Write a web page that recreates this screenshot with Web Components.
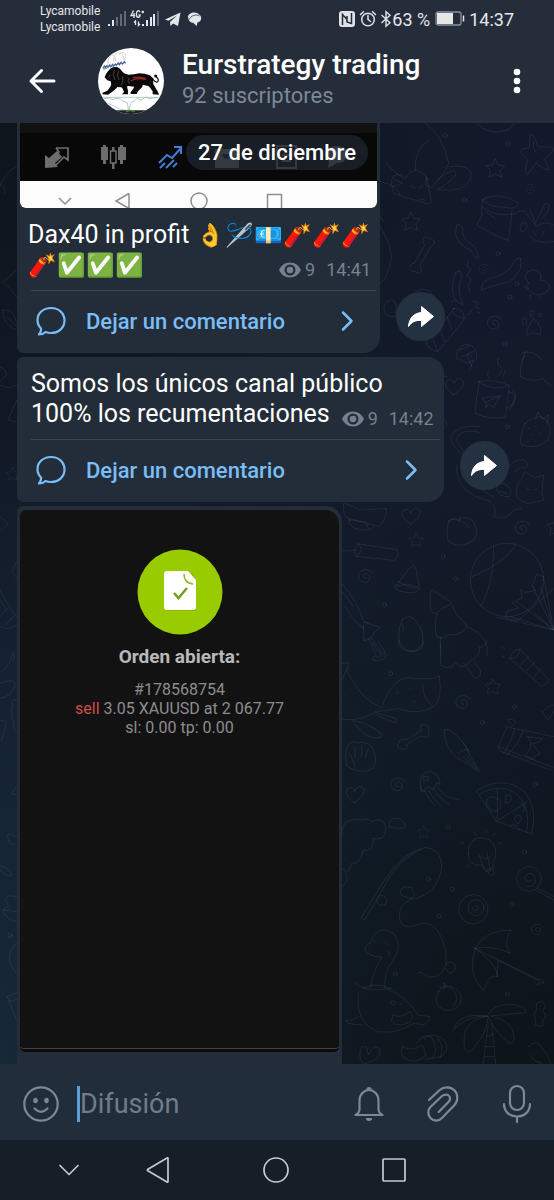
<!DOCTYPE html>
<html lang="es">
<head>
<meta charset="utf-8">
<meta name="viewport" content="width=device-width, initial-scale=1">
<title>Eurstrategy trading</title>
<style>
  html, body { margin: 0; background: #161e27; }
  body { font-family: Roboto, "Noto Sans", sans-serif; color: #fff; }
</style>
</head>
<body>
<chat-app></chat-app>

<script>
(function() {
    // shared by every element of the page
    const base = `
    <style>
      *, *::before, *::after { box-sizing: border-box; }
      svg { display: block; flex: none; fill: none; }
      button { margin: 0; padding: 0; border: 0; background: none; color: inherit; font: inherit; cursor: pointer; }
      a { color: inherit; text-decoration: none; }
    </style>
    `;

    function define(name, html) {
        const template = document.createElement("template");
        template.innerHTML = base + html;

        customElements.define(name, class extends HTMLElement {
            constructor() {
                super();
                this._shadowRoot = this.attachShadow({mode: "open"});
                this._shadowRoot.appendChild(template.content.cloneNode(true));
            }
        });
    }

    define("status-bar", `
    <style>
      :host { display: flex; align-items: center; height: 38px; padding: 0 40px; color: #e4e7eb; }
      .carriers { font-size: 12px; line-height: 16px; margin-right: 8px; }
      .right { display: flex; align-items: center; margin-left: auto; font-size: 18px; }
      .right svg + svg { margin-left: 4px; }
      .right svg + .bluetooth { margin-left: 3px; }
      .battery { margin: 0 4px 0 5px; }
    </style>
    <div class="carriers"><div>Lycamobile</div><div>Lycamobile</div></div>
    <svg width="96" height="24" viewBox="108 7 96 24" aria-hidden="true">
      <g fill="#e4e7eb">
        <rect x="108" y="24" width="2" height="2"/><rect x="112" y="20" width="2" height="6"/>
        <g fill="#626a76"><rect x="116" y="17" width="2" height="9"/><rect x="120" y="14" width="2" height="12"/><rect x="124" y="11" width="2" height="15"/><rect x="157" y="11" width="2" height="15"/></g>
        <rect x="142" y="24" width="2" height="2"/><rect x="146" y="20" width="2" height="6"/><rect x="150" y="17" width="2" height="9"/><rect x="153" y="14" width="2" height="12"/>
        <path d="M165 19.500 180.500 12.500 178 26 173 23.500 170.500 26 170 22 177 15.500 168.500 20.700Z"/>
        <path d="M188 17c0-5 9-6 11-2.500C203 17 201 22 197.500 22.500l-1 3.500-3-3c-4-.5-5-3-5.500-6Z"/>
      </g>
      <path d="M189.500 19.500c0-4 8-5.500 10-3.500" stroke="#252d3a" stroke-width=".7"/>
      <path d="M133.500 10.500 131 15.500h4.200M134 13v5M140 12c-1-2-3.500-1.500-3.500 1v2c0 3 3.500 3 3.500 0h-1.500M141.500 12h2.500M142.800 10.700v2.600M135.500 25v-4l-1.500 1.500M138.500 21.500v4l1.500-1.500" stroke="#e4e7eb" stroke-width="1.300"/>
    </svg>
    <div class="right">
      <svg width="16" height="16" viewBox="0 0 16 16" aria-hidden="true"><rect width="16" height="16" rx="3" fill="#dfe2e6"/><path d="M3.500 14V3.500L8 8.500V5M8 7.500v3.500l4.500 1.500V2" stroke="#252d3a" stroke-width="1.500"/></svg>
      <svg width="18" height="18" viewBox="0 0 18 18" stroke="#dfe2e6" stroke-width="1.500" stroke-linecap="round" aria-hidden="true"><circle cx="9" cy="9.500" r="6.300"/><path d="M9 5.500v4l2.500 2M1.500 4.500l3-2.800M16.500 4.500l-3-2.800"/></svg>
      <svg class="bluetooth" width="12" height="18" viewBox="0 0 12 18" stroke="#dfe2e6" stroke-width="1.400" aria-hidden="true"><path d="M1.500 5 10 12.800 6 16.300V1.700L10 5.200 1.500 13"/></svg>
      <span>63 %</span>
      <svg class="battery" width="30" height="16" viewBox="0 0 30 16" aria-hidden="true"><rect x="1" y="1" width="25" height="13" rx="2" stroke="#8b919b" stroke-width="1.300"/><path d="M2 2h16v11H2Z" fill="#e6e6e6"/><path d="M28.500 4.500v6" stroke="#dfe2e6" stroke-width="1.500"/></svg>
      <span>14:37</span>
    </div>
    `);

    define("channel-avatar", `
    <style>
      :host { display: block; width: 66px; height: 66px; border-radius: 50%; overflow: hidden; background: #fff; }
    </style>
    <svg width="66" height="66" viewBox="0 0 198 198" role="img" aria-label="Eurstrategy trading">
      <g stroke="#cfcfd4" stroke-width="3"><path d="M30 48c-2-30 22-38 24-8M46 40c0-30 30-36 32-4M62 20c18-18 28 4 14 22"/></g>
      <path d="M15 61l4-7 3 5 5-6 3 5 5-7 3 5 6-7 3 5 5-6 3 4 6-7 3 5 5-7 4 5 6-6 4 4" stroke="#4c5f9c" stroke-width="4"/>
      <path d="M16 64l12-4M38 56l12-4" stroke="#3c9480" stroke-width="3"/>
      <g fill="#0b0808">
        <path d="M20 88 24 78 30 70 38 61 48 57 58 57 66 62 72 70 78 76 92 80 108 79 124 76 140 77 156 82 164 90 166 102 158 112 146 113 134 110 122 114 108 116 92 114 80 117 66 118 50 116 40 110 38 100 28 97Z"/>
        <path d="M42 106 36 118 28 128 14 134 13 139 30 140 42 132 56 120 62 112Z"/>
        <path d="M66 112 74 122 78 132 72 139 90 139 90 128 86 112Z"/>
        <path d="M112 108 106 122 98 132 98 138 116 138 120 130 132 118 136 108Z"/>
        <path d="M142 108 154 116 164 130 164 139 183 140 180 132 174 122 166 108 164 96Z"/>
      </g>
      <path d="M163 90c6 14 18 16 18 6 0-7-8-8-8-14" stroke="#0b0808" stroke-width="3.500"/><circle cx="173" cy="84" r="4.500" fill="#0b0808"/>
      <path d="M30 88q6-2 7-9M49 66q-7 13 2 30M62 67q-8 15 1 29M74 86q3 16-5 26M94 90q-8 8 0 17" stroke="#5f5f66" stroke-width="2"/>
      <path d="M98 99q18-12 45-5M104 89q22-5 41 4" stroke="#8a2c1e" stroke-width="4"/>
      <path d="M12 148h174M18 152l16-2 8 5 12-4 13 2 9 7 12 4 4 24 7-25 10-4 8-8 13 5 12-8 14 4 22-4" stroke="#8fb0ad" stroke-width="2"/>
      <path d="M18 162l26 10 18 10 20 5 12-3" stroke="#c8cddd" stroke-width="3"/>
      <path d="M40 187h120v11H40Z" fill="#1a251b"/><path d="M84 191q14-7 26 0" stroke="#51803e" stroke-width="4"/>
    </svg>
    `);

    define("chat-header", `
    <style>
      :host { display: flex; align-items: center; height: 85px; padding: 0 22px; }
      .back, .more { display: grid; place-items: center; width: 40px; height: 40px; }
      .more { width: 30px; }
      channel-avatar { margin: 0 18px 0 36px; }
      .names { flex: 1; min-width: 0; }
      h1 { margin: 0; font-size: 28px; line-height: 30px; font-weight: 500; white-space: nowrap; }
      p { margin: 0; font-size: 22px; line-height: 32px; color: #7c8896; }
    </style>
    <button class="back" aria-label="Atrás"><svg width="28" height="26" viewBox="0 0 28 26" stroke="#fff" stroke-width="3" stroke-linecap="round" stroke-linejoin="round"><path d="M26 13H3M13.500 2.500 3 13l10.500 10.500"/></svg></button>
    <channel-avatar></channel-avatar>
    <div class="names"><h1><slot name="title"></slot></h1><p><slot name="subtitle"></slot></p></div>
    <button class="more" aria-label="Más opciones"><svg width="8" height="28" viewBox="0 0 8 28"><g fill="#fff"><circle cx="4" cy="5" r="3.300"/><circle cx="4" cy="14" r="3.300"/><circle cx="4" cy="23" r="3.300"/></g></svg></button>
    `);

    // doodle wallpaper, lies behind the posts
    define("chat-wallpaper", `
    <style>
      :host {
        display: block; position: absolute; inset: 0; overflow: hidden;
        background:
          radial-gradient(circle at 100% 100%, #0d141a 0, transparent 55%),
          radial-gradient(circle at 0 100%, #182a39 0, transparent 60%),
          radial-gradient(circle at 0 0, #0d161d 0, transparent 45%),
          linear-gradient(#13192a 0, #131a2a 45%, #111c2a 75%, #101a22 100%);
      }
      svg { width: 100%; height: 100%; stroke: #8aa0c0; stroke-opacity: .13; stroke-width: 3; stroke-linecap: round; stroke-linejoin: round; }
    </style>
    <svg viewBox="0 123 554 941" preserveAspectRatio="xMaxYMin slice" aria-hidden="true">
      <defs>
        <path id="star" d="M0-28 9-10 28-8 15 6 19 26 0 17-19 26-15 6-28-8-9-10Z"/>
        <path id="swirl" d="M3 4C-7 8-10-6 1-9 14-11 19 8 6 16-12 22-26 4-18-11-10-24 14-26 22-10"/>
        <path id="heart" d="M-2 26C-20 14-34-2-24-14-16-24-4-18-2-8 4-24 20-26 26-14 30 2 12 14-2 26Z"/>
        <path id="bone" d="M-22 34 8-18C-4-38 14-52 20-38 38-38 44-20 26-14L-6 42C6 58-10 74-20 60-40 64-42 38-22 34Z"/>
        <circle id="dot" r="6"/>
      </defs>
      <g transform="translate(277 120) scale(.3333)">
        <path d="M325 10q0-20-10-30M445 10q50 30 70 120-15 35-50 70M455 60q-45 30-40 90M515 140q80-10 65 40-20 40-98 28 70-40 50-56-30 6-50 30M325 125q30 40 60 50 30-50 70 5M310 185q50 10 60 40M375 165q-45-10-25 55l30 10 60 18q30 12 20-20l-12-55M352 178l25 12-30 10M450 170l-5 25 20 8M403 195q2 12 12 8M435 195q-2 10-10 10M430 238l15 3M600 10q40 40 90 20 20-10 25-25"/>
        <path d="M760 45q10-10 22 35l45 2q12 10-25 35l15 30q-5 10-40-18l-25 35q-12-4 0-45l-20-20q0-15 24-15ZM770 65q-5 20 8 35M625 230q-15 22-10 55l-15 30q55 35 95 46l10-90M615 240q50-30 110 10-5 20-40 12-50 0-70-22ZM615 260q40 35 105 20M625 275l30 20M720 275q25-10 35 15l25 30q20-20 50-5M760 270l15 40 30-60q20 0 5 30l-15 15M735 310q10-10 15 5t-15 20q-12-8 0-25M755 345q20 30 76 20M770 335l8 12M800 335l-5 13"/>
        <path d="M540 315q10-5 18 10-8 30 34 55 16 25 10 35-14-2-18-22-42-18-48-50ZM575 420l-5 18 12 10-12 18 12 14-8 16 5 20M535 460q20-20 18 15-15 30 5 80-16-8-26-20-12-30 3-75ZM730 415q-12-4-22 15-8 25-50 40-48 10-45 40 50-18 85-25 45-35 32-70ZM755 490q-25-30 10-40 35 2 25 30 35 5 25 30-30 30-60 0-12-10 0-20ZM740 500l15 5M760 525v10M785 527l5 8"/>
        <path d="M530 565q30 0 32 30-10 20-80 100-30-5-35-30 60-60 83-100ZM530 565q-10 25 32 30M510 590l15 40M487 615l15 50M462 640l20 55M340 540q-25 10-18 35 15 25 40 10M345 540q20 5 10 40M410 525q20-30 50-10l5 20-55 10M770 595q-25 35-20 50 20-12 40 0 8-25-20-50ZM740 615q-10-12 0-20t8 20M762 590q-8-18 4-18t-4 18M785 590q0-15 8-8t-8 8M540 720q-8-40 30-48 35 8 28 48M548 690l30-12M555 710l35-15M570 705q8-10 15 5M735 700q30-15 60 20M745 695l-8 25M310 320q35 60 33 95-10 60-33 75M310 290l10 15M525 545l12-4M590 545q20 0 10 10t5 10M585 570l-12 15M600 575l8 5"/>
        <use href="#star" x="655" y="145"/><use href="#star" x="402" y="305"/><use href="#bone" x="435" y="394"/>
        <use href="#swirl" transform="translate(762 208) scale(.7)"/><use href="#swirl" transform="translate(620 448) scale(.7)"/><use href="#swirl" x="652" y="610"/>
        <use href="#dot" x="505" y="47"/><use href="#dot" x="692" y="72"/><use href="#dot" x="563" y="240"/><use href="#dot" x="663" y="401"/><use href="#dot" x="720" y="491"/><use href="#dot" x="699" y="531"/><use href="#dot" x="684" y="672"/>
      </g>
      <g transform="translate(277 355) scale(.3333)">
        <path d="M545 10q25 25 45 5l-12 30M570 0l15 35M730 65q0-50 15-65M730 65q40 20 65 5l30 25M607 80q-10 50-12 95 40 20 90 12l12-95M605 80q50-10 92 12-50 20-92-12M695 110q30 5 10 40l-17 10M708 105q20 20-10 60M615 130l55-8-20 35-18-10-5 12-2-18ZM625 142l42-18M635 50q-8 10 3 20M665 10q-10 15 5 25t-10 30M685 45l-8 22M745 205q-20 50-12 65 45 15 80-15 20-50-20-70-25 0-48 20ZM775 195l8-25 12 22 20-12-5 25M755 220h3M775 215h3M760 240h3M785 235h3M800 220h3M750 258h3M775 260h3"/>
        <path d="M610 235q-10-10-45-5-30 8-25 30l20 30M610 215q-70-10-88 30-2 30 45 60M540 330q-10 80 100 110M560 340q20 50 90 85M650 450q10 25 0 35 40 15 60-20l25-5M735 370q-22 20-15 55 25 30 60 15l20-5-5-20 5-55-25 8q-20-5-30-18ZM750 400l8 5M775 405l5-5M690 345q20-35 50-30 20 10 5 25-10-10-30 10M660 405q-5-20 20-20 35 15 15 40-30 0-35-20M670 410l20 5M500 80q-10-20 10-15M500 190q20 20 0 30"/>
        <path d="M200 445q-5 40 15 45l90 25q25-20 22-55M205 445l45 20 78-5M215 490q0 40 60 35l15-10M215 495l50 5 10 20M245 567l115 17q8 20-8 32l-115-12q-10-20 8-37ZM245 567q18 15-5 38M195 585q20 8 42 0M360 690q15-20 35-50l15-8q8 4 8 15l10 55q-10 20-65 5-20-15-3-17ZM365 680q30 20 60 20M355 700q20-20 65-5M515 500q-10 40 0 60 35 25 75-5 20-25-5-60-25-15-40 0-20-10-30 5ZM515 498q15-12 30 0 25 0 30 22M545 498l5-10"/>
        <path d="M465 705q-10 10-3 65l15 5 20-15 20-10q10-10-5-15ZM480 775q-10 40 0 70 25 10 35-5 50 0 55-30l-30-30-15-30M490 845v55M570 815q70 30 60 85M375 795q-15 35-7 70 35 45 68 5 8-40-16-68-20-30-45-7ZM375 805l5 20M195 685q50 60 62 110l15 10M195 710l35 45M205 755q20 40 55 65M260 810q0-15 12-5l38 12-18 15q-5 20-30 25ZM280 845l40 55M275 850l20 45"/>
        <circle cx="690" cy="675" r="110"/><path d="M650 573q0 120-38 180M715 567q-20 50-130 98M800 665l-20-8-15 35 10 15-30 5-15-8 5 25-30 15 20 15-35 10-5 18q35 20 55-5l90-80M660 787l170 38-55-50M700 785l130 40-40-130M765 690l65 135-30-160M720 740l110 85"/>
        <use href="#heart" x="403" y="482"/><use href="#heart" x="533" y="93"/><use href="#star" transform="translate(418 555) scale(.75)"/><use href="#swirl" x="735" y="520"/><use href="#swirl" x="265" y="665"/><use href="#star" x="838" y="515"/>
        <use href="#dot" x="692" y="216"/><use href="#dot" x="499" y="604"/><use href="#dot" x="536" y="671"/><use href="#dot" x="323" y="749"/>
      </g>
      <g transform="translate(330 640) scale(.3333)">
        <path d="M128 8q5 15 25 35-2 15-15 5-12 0-8 12 20 10 37-10 0-20-25-45M205 0q0 30 35 34t42-30M332 10v65q30 20 45-8 20 30 45-5 35-20 25-40 20 0 25-22M402 70l32 44q20 0 18-22L430 64M540 55q5-25 30-28l85 92q0 15-20 20l-85-75ZM540 55q25 5 30-28M570 75l28-28M590 92l25-25M610 112l25-28M516 48l8 4M515 20l10 8"/>
        <path d="M36 70l22-2-8 25 15 25q30 60 90 85 30-90 85-90 60 10 88-5 10 70-15 90-40 30-110 8-45 8-67 8M36 237q45 10 100-20l60 18q10 12-5 12l-50-22M65 240q40 50 55 50 30 10 38-5-30-30-85-43M278 135q0 40 28 63M36 120l15-35M60 145h2M85 165h2M65 210h2M200 155l5 6M250 180l5 8M240 145h3"/>
        <path d="M208 305q5-12 20-5l45-28q-8-22 12-18 15 5 10 18 8 15-10 20l-15-4-40 26q5 20-12 13-25 0-10-22M50 375q-10-50 12-68 15-5 20 2 40-10 52 30 12 45-25 55-45 0-59-19ZM75 320v35M95 315v35M115 325l-10 30M60 340l15 40M343 270q10-5 20 2 40 30 55 70l25 45M343 270q-2 50 40 85 30 12 60 40M400 310l15 20M385 340q25-20 35-5M400 350l40 38M410 345l40 50M530 265l-25 55q0 15 25 20l130 50 12-10M525 260l147 30M505 320l160 60M555 265q-20 60-35 75M580 270q-20 55-50 75M540 250q-15-20 10-10 15 8-8 20M590 290l45 5q0 15-30 15l25 30-30 20M595 290q20 30-10 55l30 15M640 215q15-20 32-20M635 215l20 25 17-25"/>
        <path d="M270 430q0-35 30-35 30 5 30 38l-10-5-10 20-15-8-20 15ZM275 435q-10 15 10 20M285 455q15 30 30 40M295 450q20 35 40 48M310 445q20 35 50 50M322 440q25 40 65 38M280 410h15v12h-15ZM440 452q80-50 145 5 40 50 20 125l-105-38ZM450 462q70-40 120 10 32 40 20 105M502 447v90M500 543l90-55M470 480q10-20 40 0 10 30-20 34-25-12-20-34M530 465q15 0 14 12t-18 12ZM570 490q20 5 10 25M560 525q20 0 12 18t-18-3ZM540 558q15-12 30 12M36 590q-5-60 60-50 15-8 30 5 40-20 42 25-8 35-38 25 0 45-30 35-10 45-35 40l-10 25M36 685q20 10 14 40l-14 15M177 560q0-35 35-22 30 25 0 27-25 0-35-5Z"/>
        <path d="M95 830q50-80 75-120 60-80 115-87M105 838q45-75 75-130 50-65 95-80M95 830q-2 10 10 8M285 623q50 0 50 57-10 80-85 98-40-10-40-20 5-25 35-15 10 20 5 30-45 20-42 60 5 35 45 25 70-35 95 80v40q0-18 25-8 10 25-15 30l-15-18q-10 30-45 30l-25-15-10 2M140 785q0-20 20-18 15 10 8 25-20 10-28-7M415 640q0-48 42-47 45 5 40 55-10 15-8 40l5 15q-15 10-20-10-10-10-20-18-40 5-39-35ZM448 645l15 45M470 635l12 60M450 650q20 15 35-5M467 695l20-10M470 570l-2 8M495 580l-6 8M432 577l6 8M392 607l8 3M505 612l8-4M412 682l6-6"/>
        <circle cx="597" cy="717" r="37"/><path d="M623 745l50 25M620 752l52 28M605 720q-20 12-20-8 15-25 30 0 5 30-25 28"/><circle cx="430" cy="808" r="44"/><circle cx="438" cy="803" r="24"/><path d="M436 802q10-8 10 5-15 10-20-5"/>
        <path d="M105 930q-2-12 15-20 20-60 70-30 30 40 0 80-30 35-25 85M105 930q10 20 50 22-30 50-32 88M175 950q5-5 2-15M130 900l8 8M165 905l10 10M75 1030q30 30 110 15M100 1045q40-20 80 0M85 1060q-10 90 60 115 60 8 105-25l30 5q20-10 20-25l-35-5q-40-60-90-75M85 1130q-20 15-38 10 0 15 50 15M182 1088q5-12 15 0-5 15-15 0M210 1092h6M190 1125q20 12 50-10 15 15 0 30-35 20-55 0ZM435 925q30-55 108-55-25 40-2 70-50-25-106-15Zm0 0q60 40 70 85-30-10-45 42-50-50-25-127M435 925l205 105q5-15-15-12l-115-55M505 962l-5 48M630 1030q-10 8-15 0M325 1055q-20 40 20 56 40 5 50-35-5-35-45-38-15 0-25 17ZM325 1040l20 5-5-17 15 17 5-5M360 1040q35 30 10 60"/>
        <path d="M372 1168q10-50 100-40 15-35 70-35 50 5 45 25l-105 10q70 15 70 65 0 20-12 18-45-30-65-82-5 60-55 105-25 8-15-60 25-45 70-45-60-5-103 39ZM475 1150l-15 120M485 1150l12 120M470 1190l20-8M465 1220h25M465 1250h28M620 1090l15-5 12 10-8 20q15 10 0 25l-2 20-20-5v-20q-10-10 3-25ZM90 1240q-2-25 20-20l5 25q20-40 35-15 5 30-48 42-15-10-12-32ZM218 1220q-10 15 0 30 35 30 70-5-10-40-22-25-20 15-48 0ZM260 1210q20-35 70-20 40 30 5 60l-50 8M285 1200q-5-15 20-8 20 40 5 60M325 1195q20 30 5 58M595 1220q20-20 35-5 25 30 35 60M600 1245q10 20 35 25"/>
        <use href="#star" transform="translate(488 140) scale(.85)"/><use href="#star" transform="translate(281 576) scale(.65)"/><use href="#swirl" x="398" y="188"/><use href="#swirl" x="203" y="435"/><use href="#swirl" transform="translate(621 870) scale(.8)"/><use href="#heart" x="76" y="462"/>
        <use href="#dot" x="182" y="101"/><use href="#dot" x="554" y="200"/><use href="#dot" x="457" y="247"/><use href="#dot" x="616" y="433"/><use href="#dot" x="354" y="562"/><use href="#dot" x="584" y="636"/><use href="#dot" x="296" y="718"/><use href="#dot" x="367" y="748"/><use href="#dot" x="545" y="793"/><use href="#dot" x="327" y="829"/><use href="#dot" x="196" y="1002"/><use href="#dot" x="532" y="1062"/>
      </g>
      <g transform="translate(0 500) scale(.3333)">
        <path d="M0 50l12 10 12 12-12 10-12 10M0 270l25 45 25 35M0 350l22-25M0 380q25 15 50-5M15 375l30-30M0 300l20 30M5 515q35-30 33-60M42 455q5 20-2 28M0 550q35-15 46 0-8 40-46 45M0 660q18 0 18 15l-15 50M50 185l-14 30 14 18M50 600q-20-5-12 20-10 10 0 20-8 15 4 25-8 20 8 30M50 860l-15 20 15 5M50 1010q-35-20-25 10 5 20 20 12M0 1095q35 15 35 30-10 10-35-15M50 1190q-40-10-30 15l5 15-15 10q0 25 40 35M10 1230l40 5M50 1330q-45 40 0 90M22 1490l28-12M22 1490l28 70M27 1505l23-8"/>
        <use href="#dot" x="30" y="1307"/><use href="#star" transform="translate(38 -78) scale(.7)"/>
        <path d="M0-400q20 10 20 25l-20 20M0-345q25 15 50 0M50-300l-25 60 25 5M50-1000q-40 20-50 60M50-690l-40 35 40 45M8-570q35-5 42 40M8-570q0 45 42 60M20-550l30 30M0-950q15 10 15 30"/>
      </g>
    </svg>
    `);

    // charting app toolbar, the visible end of the posted photo
    define("market-photo", `
    <style>
      :host { display: block; width: 357px; overflow: hidden; border-radius: 0 0 6px 6px; background: #080808; }
      .bars { border-top: 10px solid #111; }
      .nav { background: #fdfdfd; }
      svg { width: 100%; height: auto; }
    </style>
    <div class="bars">
      <svg viewBox="20 133 357 48" aria-hidden="true">
        <g fill="#6d6d6d">
          <path d="M45 168V155l4 3 8-7 5 6-7 6 3 4Z"/>
          <path d="M101 147h2v-2h3v2h2v13h-2v4h-3v-4h-2ZM118 147h2v-2h3v2h3v13h-3v4h-3v-4h-2ZM112 147h2.500v22H112Z"/>
          <path d="M215 149h24v19h-24Z"/>
          <path d="M337 146c14 0 14 17 0 17l-9 5 1-7c-8-5-4-15 8-15Z"/>
        </g>
        <path d="M110.500 151h5.500v12h-5.500Z" fill="#080808" stroke="#6d6d6d" stroke-width="1.500"/>
        <path d="M56 148h12v12l-4-3-8 8M56 148l3 4-3 3" stroke="#6d6d6d" stroke-width="1.700"/>
        <path d="M277 146h19v22h-19ZM282 155h9M282 161h9" stroke="#6d6d6d" stroke-width="2"/>
        <path d="M222 154a5 5 0 0 0 10 0" fill="#181c23"/>
        <path d="M159 163l8-8 5 3 9-10M174 147h7v7M160 168l5-5M166 168l8-8M173 167l4-4" stroke="#3f7fd8" stroke-width="2"/>
      </svg>
    </div>
    <div class="nav">
      <svg viewBox="20 181 357 27" stroke="#8e8e8e" stroke-width="1.500" aria-hidden="true"><path d="M59 198l6 6 6-6M129 193.500v15M129 193.500l-13 7.500 13 7.500"/><circle cx="199" cy="201" r="8"/><path d="M267.500 209v-14.500h14V209"/></svg>
    </div>
    `);

    define("order-photo", `
    <style>
      :host { display: flex; flex-direction: column; align-items: center; flex: 1; width: 319px; min-height: 541px; padding-top: 39px; border-radius: 6px 14px 5px 5px; background: #121212; color: #8d8d8d; text-align: center; font-size: 16px; line-height: 19px; border-bottom: 3px solid #0c0c0c; box-shadow: inset 0 -1px #45413f; }
      h2 { margin: 10px 0 11px; font-size: 19px; line-height: 24px; font-weight: 700; color: #b9b9b9; }
      .sell { color: #cf4f46; }
    </style>
    <svg width="86" height="86" viewBox="0 0 86 86" aria-hidden="true">
      <circle cx="43" cy="43" r="42.500" fill="#99cc00"/>
      <path d="M30 24h26l3 8v30H30Z" fill="#5f8500" opacity=".25"/>
      <path d="M30 22h21l8 9v27q0 3-3 3H30q-3 0-3-3V25q0-3 3-3Z" fill="#fff"/>
      <path d="M47 25q0 9 9 10" stroke="#8cb81b" stroke-width="1.500"/><path d="M37 44l4.500 5 8.500-10" stroke="#74a01c" stroke-width="2.500"/>
    </svg>
    <h2>Orden abierta:</h2>
    <div>#178568754</div>
    <div><span class="sell">sell</span> 3.05 XAUUSD at 2 067.77</div>
    <div>sl: 0.00 tp: 0.00</div>
    `);

    define("comment-link", `
    <style>
      :host { display: block; margin: 0 4px 0 14px; border-top: 1px solid #3b4753; }
      a { display: flex; align-items: center; height: 62px; padding: 0 22px 2px 4px; font-size: 22px; font-weight: 500; color: #7bbdf6; }
      span { flex: 1; margin-left: 20px; white-space: nowrap; }
    </style>
    <a href="#comentarios">
      <svg width="31" height="30" viewBox="0 0 31 30" stroke="#7bbdf6" stroke-width="2.200" stroke-linejoin="round"><path d="M16 2C8 2 2.500 7.500 2.500 14c0 4 1.500 6.500 3.500 8.500.5 2-.5 4-2 6 3 0 5-1 6.500-2.500 2 .8 3.500 1 5.500 1 8 0 13.500-5.500 13.500-12.500S24 2 16 2Z"/></svg>
      <span>Dejar un comentario</span>
      <svg width="14" height="22" viewBox="0 0 14 22" stroke="#7bbdf6" stroke-width="2.500" stroke-linecap="round" stroke-linejoin="round"><path d="M3 2.500 11.500 11 3 19.500"/></svg>
    </a>
    `);

    let postTemplate = document.createElement("template");
    postTemplate.innerHTML = base + `
    <style>
      :host { display: flex; align-items: flex-end; gap: 16px; }
      :host([open-end]) { flex: 1; align-items: stretch; }
      .bubble { display: flex; flex-direction: column; border-radius: 6px 16px 16px 6px; background: #222d39; }
      :host([continued]) .bubble { border-top-left-radius: 0; border-top-right-radius: 0; }
      :host([open-end]) .bubble { padding-bottom: 12px; border-bottom-left-radius: 0; border-bottom-right-radius: 0; }
      ::slotted([slot="media"]) { margin: 0 3px; }
      :host([open-end]) ::slotted([slot="media"]) { margin-top: 4px; }
      .text { display: flow-root; padding: 12px 10px 10px 14px; font-size: 25px; line-height: 30px; }
      :host([continued]) .text { padding-left: 11px; padding-right: 9px; }
      ::slotted(.emoji) { font-size: 23px; line-height: 1; }
      .meta { float: right; display: flex; align-items: center; margin: 9px 0 0 12px; font-size: 18px; line-height: 21px; color: #75818e; }
      .meta span { margin-left: 4px; }
      .meta time { margin-left: 11px; }
      .share { display: grid; place-items: center; width: 49px; height: 49px; margin-bottom: 12px; border-radius: 50%; background: rgba(40, 55, 70, .82); }
    </style>
    <article class="bubble">
      <slot name="media"></slot>
      <div class="text"><slot></slot><div class="meta">
        <svg width="22" height="16" viewBox="0 0 22 16"><path fill="#75818e" fill-rule="evenodd" d="M11 .5C6 .5 2 3.500 0 8c2 4.500 6 7.500 11 7.500S20 12.500 22 8C20 3.500 16 .5 11 .5ZM11 2.500a5.500 5.500 0 1 1 0 11 5.500 5.500 0 0 1 0-11Z"/><circle cx="11" cy="8" r="3.300" fill="#75818e"/></svg>
        <span></span><time></time>
      </div></div>
      <comment-link></comment-link>
    </article>
    <button class="share" aria-label="Compartir"><svg width="28" height="24" viewBox="0 0 28 24"><path d="M14.500 1.500 26.500 11.500 14.500 21.500V15.500C8.500 15 4.500 17 1.500 21.500 2 13 7 8 14.500 7.500Z" fill="#fff" stroke="#fff" stroke-linejoin="round"/></svg></button>
    `;

    class ChannelPost extends HTMLElement {
        constructor() {
            super();
            this._shadowRoot = this.attachShadow({mode: "open"});
            this._shadowRoot.appendChild(postTemplate.content.cloneNode(true));
        }

        connectedCallback() {
            // the newest post runs on below the fold, only its photo is laid out
            if (this.hasAttribute("open-end")) {
                this._shadowRoot.querySelectorAll(".text, comment-link, .share").forEach(el => el.remove());
                return;
            }
            this._shadowRoot.querySelector(".meta span").textContent = this.getAttribute("views");
            this._shadowRoot.querySelector("time").textContent = this.getAttribute("time");
        }
    }
    customElements.define("channel-post", ChannelPost);

    define("message-composer", `
    <style>
      :host { display: flex; align-items: center; height: 76px; padding: 3px 17px 0 21px; background: #222d3b; }
      button { display: grid; place-items: center; flex: none; width: 40px; height: 40px; margin-left: 34px; }
      button:first-of-type { margin-left: 0; }
      svg { stroke: #7b8896; stroke-width: 2.200; stroke-linecap: round; stroke-linejoin: round; }
      input { flex: 1; min-width: 0; height: 36px; margin-left: 16px; padding: 0; border: 0; border-left: 3px solid #5a9fd6; outline: 0; background: none; color: #fff; font: 400 27px Roboto, sans-serif; }
      input::placeholder { color: #6f7d8b; opacity: 1; }
    </style>
    <button aria-label="Emojis"><svg width="38" height="38" viewBox="0 0 38 38"><circle cx="19" cy="19" r="16.700"/><path d="M12.500 23.500q6.500 6.500 13 0"/><ellipse cx="13.500" cy="15.500" rx="1.200" ry="1.700" fill="#7b8896"/><ellipse cx="24.500" cy="15.500" rx="1.200" ry="1.700" fill="#7b8896"/></svg></button>
    <input type="text" placeholder="Difusión" aria-label="Difusión">
    <button aria-label="Notificaciones"><svg width="32" height="36" viewBox="0 0 32 36"><path d="M2.500 29h27q-4-2-4-6v-8.500C25.500 8.500 21 4 16 4S6.500 8.500 6.500 14.500V23q0 4-4 6Z"/><path d="M14.500 3q1.500-2 3 0M14 33h4q-2 2.200-4 0Z" fill="#7b8896"/></svg></button>
    <button aria-label="Adjuntar"><svg width="34" height="36" viewBox="0 0 34 36"><path d="M3 14 13.700 4C16 2 18.500 1.300 21 1.300 27 1.300 31.300 6 31.300 11.500 31.300 14.500 30.500 17 28.500 19L16 32C14.500 33.500 12.500 34.700 10.300 34.700 6 34.700 2.300 31 2.300 26.300 2.300 24 3 22.300 4.700 20.700L16 10C17.300 9 18.700 8.700 20.300 8.700 22.500 8.700 24 10.500 24 12.700 24 14 23.500 15 22.700 15.700L12.700 26"/></svg></button>
    <button aria-label="Mensaje de voz"><svg width="30" height="40" viewBox="0 0 30 40"><rect x="8" y="2" width="14" height="24" rx="7"/><path d="M2 20c0 7 5 12.500 13 12.500S28 27 28 20M15 32.500V38"/></svg></button>
    `);

    define("system-nav", `
    <style>
      :host { display: grid; grid-template-columns: 39fr 60fr 118fr 118fr 118fr 101fr; align-items: center; height: 60px; background: #161e27; }
      button { display: grid; place-items: center; height: 48px; }
      button:first-of-type { grid-column: 2; }
      svg { stroke: #c8cacc; stroke-width: 1.700; stroke-linecap: round; stroke-linejoin: round; }
    </style>
    <button aria-label="Ocultar teclado"><svg width="22" height="14" viewBox="0 0 22 14"><path d="M2 2.500 11 11.500 20 2.500"/></svg></button>
    <button aria-label="Volver"><svg width="26" height="28" viewBox="0 0 26 28"><path d="M23 2.500v23q0 1-1 .5L2.500 14.500v-1L22 2q1-.5 1 .5Z"/></svg></button>
    <button aria-label="Inicio"><svg width="28" height="28" viewBox="0 0 28 28"><circle cx="14" cy="14" r="12"/></svg></button>
    <button aria-label="Recientes"><svg width="26" height="26" viewBox="0 0 26 26"><rect x="2" y="2" width="22" height="22" rx="1"/></svg></button>
    `);

    define("chat-app", `
    <style>
      :host { display: flex; flex-direction: column; min-height: 100vh; }
      header { background: #252d3a; }
      main { position: relative; flex: 1; display: flex; flex-direction: column; overflow: hidden; }
      .posts { position: relative; flex: 1; display: flex; flex-direction: column; gap: 4px; padding: 0 17px; }
      .date { position: absolute; top: 12px; left: 0; right: 0; display: flex; justify-content: center; font-size: 22px; line-height: 35px; font-weight: 500; }
      .date span { padding: 0 12px; border-radius: 18px; background: rgba(32, 38, 48, .72); }
    </style>
    <header>
      <status-bar></status-bar>
      <chat-header><span slot="title">Eurstrategy trading</span><span slot="subtitle">92 suscriptores</span></chat-header>
    </header>
    <main>
      <chat-wallpaper></chat-wallpaper>
      <div class="posts">
        <channel-post continued views="9" time="14:41"><market-photo slot="media"></market-photo>Dax40 in profit <span class="emoji">👌🪡💶🧨🧨🧨<br>🧨✅✅✅</span></channel-post>
        <channel-post views="9" time="14:42">Somos los únicos canal público<br>100% los recumentaciones</channel-post>
        <channel-post open-end><order-photo slot="media"></order-photo></channel-post>
      </div>
      <div class="date"><span>27 de diciembre</span></div>
    </main>
    <message-composer></message-composer>
    <system-nav></system-nav>
    `);
})();
</script>
</body>
</html>
